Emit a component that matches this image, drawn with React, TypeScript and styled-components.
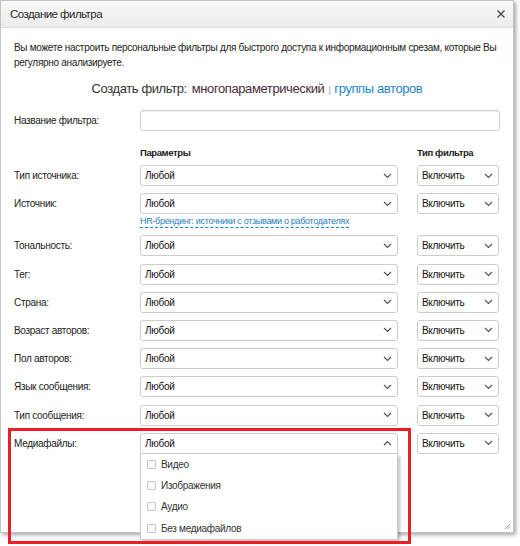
import React from 'react';
import styled, { createGlobalStyle } from 'styled-components';

const Global = createGlobalStyle`
  html, body { margin: 0; padding: 0; background: #fff; }
  body { font-family: "Liberation Sans", Arial, sans-serif; color: #222; }
`;

const Page = styled.div`
  position: relative;
  width: 520px;
  height: 546px;
  overflow: hidden;
  background: #fff;
`;

const Dialog = styled.div`
  position: relative;
  width: 514px;
  height: 533px;
  box-sizing: border-box;
  border: 1px solid #c4c4c4;
  background: #fff;
  box-shadow: 2px 2px 4px rgba(0, 0, 0, 0.35);
  display: flex;
  flex-direction: column;
`;

const TitleBar = styled.div`
  height: 27px;
  flex: none;
  box-sizing: border-box;
  padding: 0 7px 0 9px;
  display: flex;
  align-items: center;
  justify-content: space-between;
  background: linear-gradient(#f8f8f8, #ececec);
  border-bottom: 1px solid #dcdcdc;
`;

const Title = styled.span`
  font-size: 11.5px;
  letter-spacing: -0.55px;
  color: #2a2a2a;
`;

const Close = styled.span`
  display: flex;
  width: 10px;
  height: 10px;
`;

const Body = styled.div`
  padding: 0 13px;
  display: flex;
  flex-direction: column;
`;

const Description = styled.p`
  margin: 12px 0 0;
  font-size: 10px;
  letter-spacing: -0.3px;
  line-height: 15px;
  color: #222;
`;

const CreateLine = styled.div`
  margin-top: 10px;
  text-align: center;
  font-size: 13px;
  letter-spacing: -0.4px;
  line-height: 18px;
  color: #333;
`;

const Current = styled.span`
  color: #4a2c3a;
  margin-left: 5px;
`;

const Sep = styled.span`
  color: #8a9aa8;
  font-size: 9px;
  margin: 0 4px;
`;

const BlueLink = styled.span`
  color: #1f86c6;
`;

const Row = styled.div<{ $top?: number }>`
  display: grid;
  grid-template-columns: 107px 258px 82px;
  column-gap: 19px;
  align-items: start;
  margin-top: ${p => p.$top ?? 0}px;
`;

const NameRow = styled.div`
  display: grid;
  grid-template-columns: 107px 1fr;
  column-gap: 19px;
  margin-top: 11px;
`;

const Label = styled.div`
  font-size: 10px;
  letter-spacing: -0.3px;
  line-height: 21px;
  color: #222;
  white-space: nowrap;
`;

const ColHead = styled.div`
  font-size: 9.5px;
  letter-spacing: -0.4px;
  font-weight: bold;
  line-height: 14px;
  color: #222;
`;

const TextInput = styled.div`
  height: 21px;
  box-sizing: border-box;
  border: 1px solid #cfcfcf;
  border-radius: 3px;
  box-shadow: inset 0 1px 1px rgba(0, 0, 0, 0.06);
  background: #fff;
`;

const Rows = styled.div`
  display: flex;
  flex-direction: column;
  gap: 7.2px;
  margin-top: 5px;
`;

const Cell = styled.div`
  position: relative;
  display: flex;
  flex-direction: column;
`;

const SelectBox = styled.div<{ $open?: boolean }>`
  height: 21px;
  box-sizing: border-box;
  border: 1px solid #cdcdcd;
  border-radius: ${p => (p.$open ? '3px 3px 0 0' : '3px')};
  background: #fff;
  display: flex;
  align-items: center;
  justify-content: space-between;
  padding: 0 5px 0 4px;
  font-size: 10px;
  letter-spacing: -0.3px;
  color: #111;
`;

const HrLink = styled.span`
  align-self: flex-start;
  margin-top: 1px;
  font-size: 9px;
  letter-spacing: -0.3px;
  line-height: 12px;
  white-space: nowrap;
  color: #1f7fc0;
  border-bottom: 1px dashed #1f7fc0;
`;

const Menu = styled.div`
  position: absolute;
  top: 21px;
  left: 0;
  right: 0;
  z-index: 2;
  background: #fff;
  border: 1px solid #cdcdcd;
  border-top: none;
  box-shadow: 2px 2px 3px rgba(0, 0, 0, 0.25);
  display: flex;
  flex-direction: column;
`;

const MenuItem = styled.div`
  height: 21.3px;
  display: flex;
  align-items: center;
  gap: 5px;
  padding-left: 6px;
  font-size: 10px;
  letter-spacing: -0.3px;
  color: #333;
`;

const Check = styled.span`
  width: 9px;
  height: 9px;
  box-sizing: border-box;
  border: 1px solid #c8c8c8;
  border-radius: 1px;
  background: #fafafa;
`;

const Grip = styled.svg`
  position: absolute;
  right: 2px;
  bottom: 2px;
`;

const Highlight = styled.div`
  position: absolute;
  left: 8px;
  top: 428px;
  width: 403px;
  height: 116px;
  box-sizing: border-box;
  border: 3px solid #ee1c24;
  pointer-events: none;
  z-index: 5;
`;

const Chevron = ({ up }: { up?: boolean }) => (
  <svg width="9" height="6" viewBox="0 0 9 6">
    <polyline
      points={up ? '1,5 4.5,1.5 8,5' : '1,1 4.5,4.5 8,1'}
      fill="none"
      stroke="#555"
      strokeWidth="1.2"
    />
  </svg>
);

const Select = ({ value, open }: { value: string; open?: boolean }) => (
  <SelectBox $open={open}>
    <span>{value}</span>
    <Chevron up={open} />
  </SelectBox>
);

const rows = [
  'Тональность:',
  'Тег:',
  'Страна:',
  'Возраст авторов:',
  'Пол авторов:',
  'Язык сообщения:',
  'Тип сообщения:',
];

const media = ['Видео', 'Изображения', 'Аудио', 'Без медиафайлов'];

export default function App() {
  return (
    <Page>
      <Global />
      <Dialog>
        <TitleBar>
          <Title>Создание фильтра</Title>
          <Close>
            <svg width="10" height="10" viewBox="0 0 10 10">
              <path d="M1.5 1.5 L8.5 8.5 M8.5 1.5 L1.5 8.5" stroke="#444" strokeWidth="1.3" />
            </svg>
          </Close>
        </TitleBar>
        <Body>
          <Description>
            Вы можете настроить персональные фильтры для быстрого доступа к информационным срезам, которые Вы
            регулярно анализируете.
          </Description>
          <CreateLine>
            Создать фильтр:<Current>многопараметрический</Current>
            <Sep>|</Sep>
            <BlueLink>группы авторов</BlueLink>
          </CreateLine>
          <NameRow>
            <Label>Название фильтра:</Label>
            <TextInput />
          </NameRow>
          <Row $top={15}>
            <span />
            <ColHead>Параметры</ColHead>
            <ColHead>Тип фильтра</ColHead>
          </Row>
          <Rows>
            <Row>
              <Label>Тип источника:</Label>
              <Select value="Любой" />
              <Select value="Включить" />
            </Row>
            <Row>
              <Label>Источник:</Label>
              <Cell>
                <Select value="Любой" />
                <HrLink>HR-брендинг: источники с отзывами о работодателях</HrLink>
              </Cell>
              <Select value="Включить" />
            </Row>
            {rows.map(r => (
              <Row key={r}>
                <Label>{r}</Label>
                <Select value="Любой" />
                <Select value="Включить" />
              </Row>
            ))}
            <Row>
              <Label>Медиафайлы:</Label>
              <Cell>
                <Select value="Любой" open />
                <Menu>
                  {media.map(m => (
                    <MenuItem key={m}>
                      <Check />
                      <span>{m}</span>
                    </MenuItem>
                  ))}
                </Menu>
              </Cell>
              <Select value="Включить" />
            </Row>
          </Rows>
        </Body>
        <Grip width="7" height="7" viewBox="0 0 7 7">
          <path d="M6 1 L1 6 M6 3.5 L3.5 6 M6 5.5 L5.5 6" stroke="#999" strokeWidth="0.9" />
        </Grip>
      </Dialog>
      <Highlight />
    </Page>
  );
}
